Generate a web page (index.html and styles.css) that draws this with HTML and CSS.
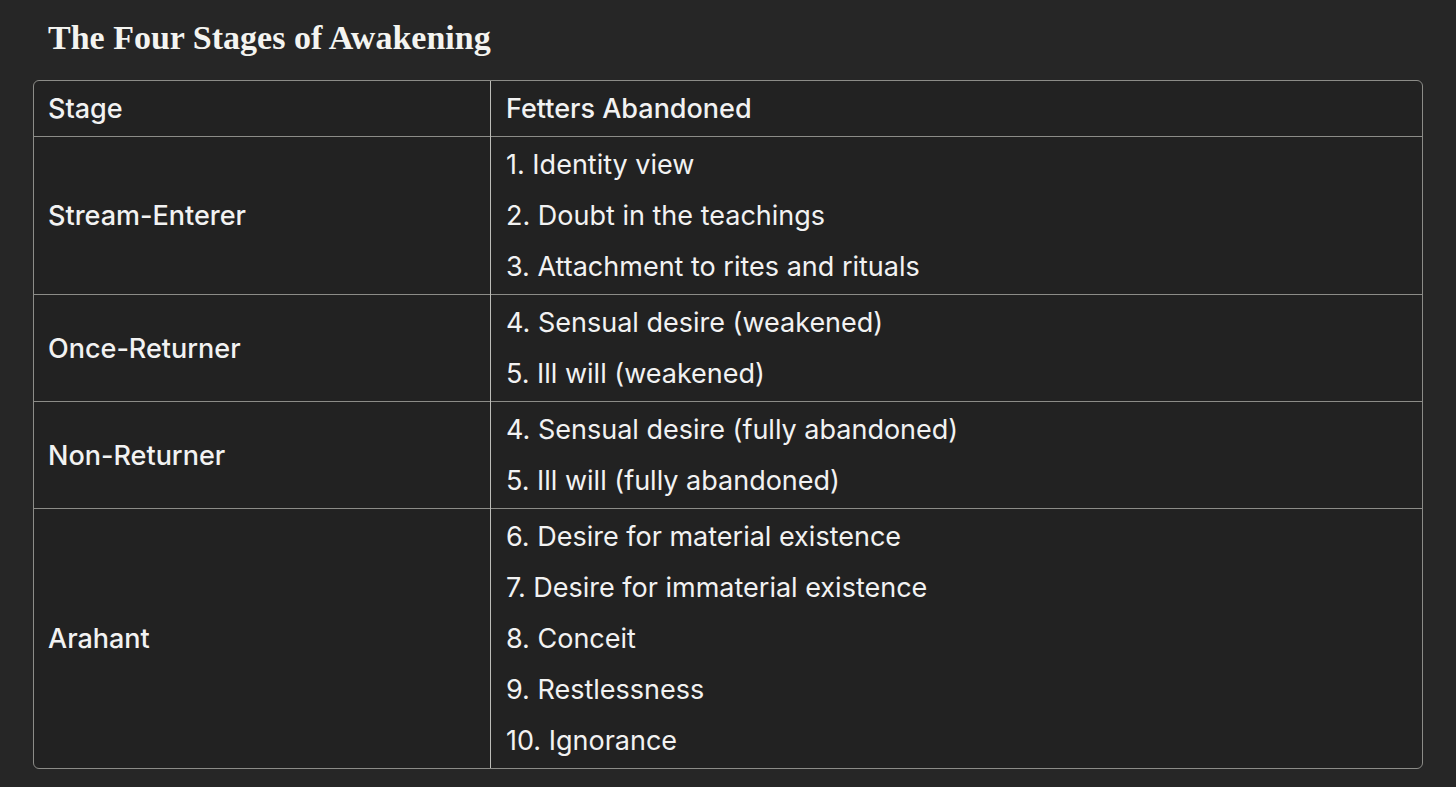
FILE: index.html
```html
<!DOCTYPE html>
<html>
<head>
<meta charset="utf-8">
<link rel="stylesheet" href="styles.css">
</head>
<body>
<main class="page">
  <h2 class="title">The Four Stages of Awakening</h2>
  <div class="table-wrap">
    <table class="stages">
      <thead>
        <tr><th class="col-stage">Stage</th><th>Fetters Abandoned</th></tr>
      </thead>
      <tbody>
        <tr>
          <td class="stage">Stream-Enterer</td>
          <td><p>1. Identity view</p><p>2. Doubt in the teachings</p><p>3. Attachment to rites and rituals</p></td>
        </tr>
        <tr>
          <td class="stage">Once-Returner</td>
          <td><p>4. Sensual desire (weakened)</p><p>5. Ill will (weakened)</p></td>
        </tr>
        <tr>
          <td class="stage">Non-Returner</td>
          <td><p>4. Sensual desire (fully abandoned)</p><p>5. Ill will (fully abandoned)</p></td>
        </tr>
        <tr>
          <td class="stage">Arahant</td>
          <td><p>6. Desire for material existence</p><p>7. Desire for immaterial existence</p><p>8. Conceit</p><p>9. Restlessness</p><p>10. Ignorance</p></td>
        </tr>
      </tbody>
    </table>
  </div>
</main>
</body>
</html>
```

FILE: styles.css
```css
html, body {
  margin: 0;
  padding: 0;
  background: #262626;
}
.page {
  padding: 17px 33px 0 33px;
  color: #f2f2f2;
  font-family: Inter, "Noto Sans", sans-serif;
}
.title {
  margin: 0 0 21px 15px;
  font-family: "Liberation Serif", "DejaVu Serif", serif;
  font-weight: 700;
  font-size: 34px;
  line-height: 42px;
  color: #f4f4f0;
}
.table-wrap {
  border: 1px solid #8c8c88;
  border-radius: 6px;
  overflow: hidden;
  background: #222222;
}
.stages {
  width: 100%;
  border-collapse: collapse;
  font-size: 27px;
}
.stages th, .stages td {
  text-align: left;
  vertical-align: middle;
  padding: 2px 15px 2px 14px;
  border-left: 1px solid #bdbdb8;
  border-top: 1px solid #8c8c88;
}
.stages td + td, .stages th + th {
  padding-left: 15px;
}
.stages th:first-child, .stages td:first-child {
  border-left: none;
}
.stages thead th {
  border-top: none;
  height: 51px;
  font-weight: 500;
}
.col-stage {
  width: 427px;
}
.stage {
  font-weight: 500;
}
.stages td p {
  margin: 0;
  line-height: 51px;
  font-weight: 400;
}
```
